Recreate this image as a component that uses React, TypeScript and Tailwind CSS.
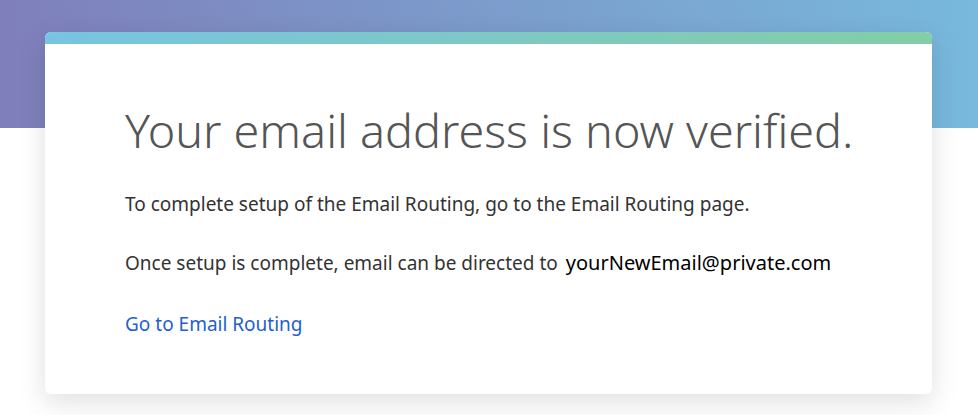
export default function App() {
  return (
    <div className="min-h-[415px] w-full bg-white bg-[linear-gradient(90deg,#7f7fbb_0%,#78b9dd_100%)] bg-[length:100%_128px] bg-no-repeat pt-[32px] font-['Segoe_UI','Noto_Sans','Open_Sans',sans-serif]">
      <div className="ml-[45px] w-[887px] overflow-hidden rounded-[6px] bg-white shadow-[0_8px_28px_rgba(0,0,0,0.13)]">
        <div className="h-[12px] bg-[linear-gradient(90deg,#78c4e2_0%,#84cda6_100%)]" />
        <div className="px-[80px] pt-[57px] pb-[56px]">
          <h1 className="whitespace-nowrap text-[46.7px] leading-[58px] font-light text-[#555555]">
            Your email address is now verified.
          </h1>
          <p className="mt-[31px] text-[19px] leading-[28px] text-[#333333]">
            To complete setup of the Email Routing, go to the Email Routing page.
          </p>
          <p className="mt-[31px] flex items-baseline text-[19px] leading-[28px] text-[#333333]">
            <span>Once setup is complete, email can be directed to</span>
            <span className="ml-[8px] text-[20px] text-black">yourNewEmail@private.com</span>
          </p>
          <a href="#" className="mt-[33px] block text-[19px] leading-[28px] text-[#1f5fcf]">
            Go to Email Routing
          </a>
        </div>
      </div>
    </div>
  );
}
